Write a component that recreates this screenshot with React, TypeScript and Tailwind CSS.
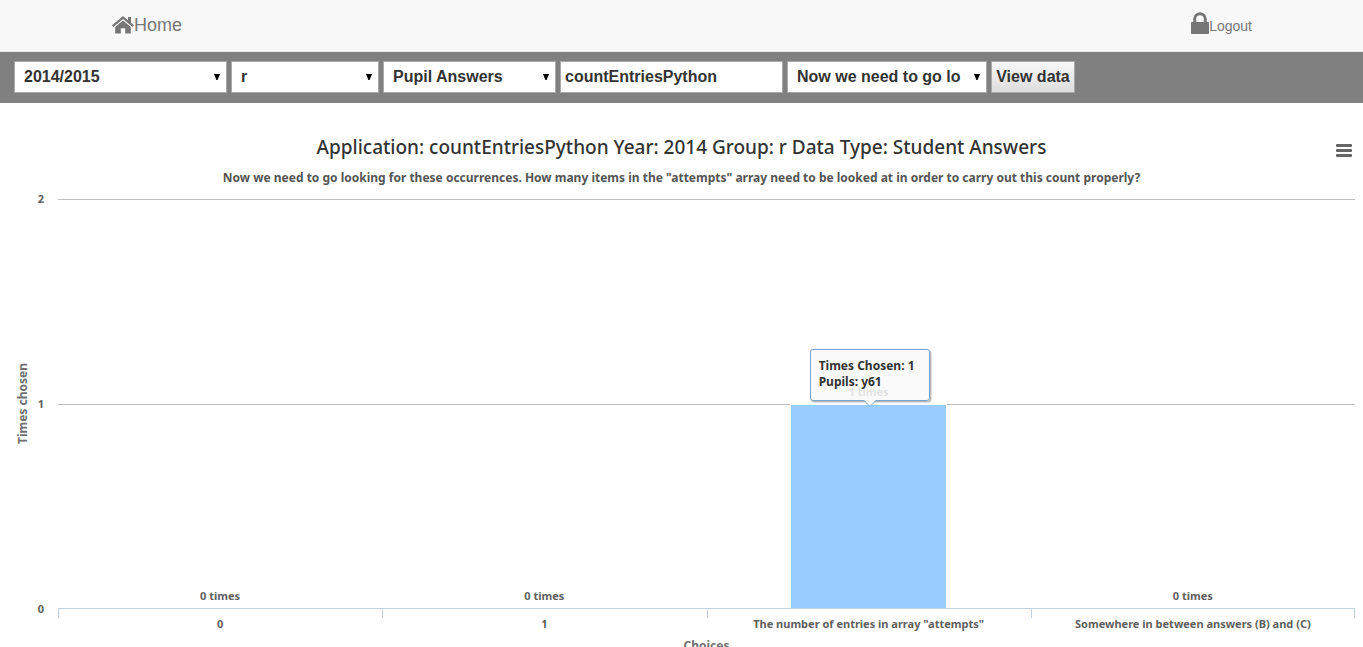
import React from "react";

type Category = { label: string; times: number };

const maxTimes = 2;

const categories: Category[] = [
  { label: "0", times: 0 },
  { label: "1", times: 0 },
  { label: 'The number of entries in array "attempts"', times: 1 },
  { label: "Somewhere in between answers (B) and (C)", times: 0 },
];

function HomeIcon() {
  return (
    <svg viewBox="0 0 22 18" className="h-[18px] w-[22px]" fill="currentColor" aria-hidden="true">
      <path d="M11 0 0 9.3l1.4 1.6L11 2.9l9.6 8 1.4-1.6-3-2.5V1h-3v3.2z" />
      <path d="M11 4.4 3.2 10.9V17.6h5.6v-5.4h4.4v5.4h5.6v-6.7z" />
    </svg>
  );
}

function LockIcon() {
  return (
    <svg viewBox="0 0 18 22" className="h-[22px] w-[18px]" fill="currentColor" aria-hidden="true">
      <path
        fillRule="evenodd"
        d="M2.2 10V7a6.8 6.8 0 0 1 13.6 0v3h1.2a1 1 0 0 1 1 1v10a1 1 0 0 1-1 1H1a1 1 0 0 1-1-1V11a1 1 0 0 1 1-1zM5.2 10h7.6V7a3.8 3.8 0 0 0-7.6 0z"
      />
    </svg>
  );
}

function Select({ label, value, width }: { label: string; value: string; width: string }) {
  return (
    <div className={`relative ${width}`}>
      <select
        aria-label={label}
        defaultValue={value}
        className="h-8 w-full appearance-none border border-[#a9a9a9] bg-white pr-6 pl-[9px] text-[#333]"
      >
        <option value={value}>{value}</option>
      </select>
      <svg
        viewBox="0 0 6 6"
        className="pointer-events-none absolute top-[13px] right-[7px] size-[6px] fill-black"
        aria-hidden="true"
      >
        <path d="M0 0h6L3.6 6H2.4z" />
      </svg>
    </div>
  );
}

function Tooltip() {
  return (
    <div className="absolute bottom-full left-1/2 z-10 mb-1 ml-px w-[120px] -translate-x-1/2">
      <div className="rounded-[3px] border border-[#7aa6d0] bg-[#f9f9f9]/85 px-2 pt-2 pb-[10px] text-xs leading-4 font-bold whitespace-nowrap text-[#333] shadow-[1px_1px_2px_rgba(0,0,0,0.4)]">
        <p>Times Chosen: 1</p>
        <p>Pupils: y61</p>
      </div>
      <svg
        viewBox="0 0 12 7"
        className="absolute top-full left-1/2 -mt-px h-[7px] w-3 -translate-x-1/2"
        aria-hidden="true"
      >
        <path d="M0 0h12L6 6z" fill="#f9f9f9" />
        <path d="M0 .5 6 6.5l6-6" fill="none" stroke="#7aa6d0" />
      </svg>
    </div>
  );
}

function Column({ times }: { times: number }) {
  return (
    <div className="flex flex-col items-center justify-end">
      <p className="mb-1 leading-4">{times} times</p>
      {times > 0 && (
        <div
          className="relative w-[48.5%] border border-b-0 border-white bg-[#99ccff]"
          style={{ height: `${(times / maxTimes) * 100}%` }}
        >
          <Tooltip />
        </div>
      )}
    </div>
  );
}

function Chart() {
  return (
    <section className="pt-8 font-['Noto_Sans','Open_Sans',sans-serif] text-[11px] font-bold text-[#606060]">
      <header className="relative text-center">
        <h1 className="text-[19px] leading-6 font-medium text-[#333]">
          Application: countEntriesPython Year: 2014 Group: r Data Type: Student Answers
        </h1>
        <p className="mt-[9px] text-xs leading-5 text-[#555]">
          Now we need to go looking for these occurrences. How many items in the "attempts" array need to be looked
          at in order to carry out this count properly?
        </p>
        <button type="button" aria-label="Chart menu" className="absolute top-[9px] right-[11px] text-[#666]">
          <svg viewBox="0 0 16 13" className="h-[13px] w-4" fill="currentColor" aria-hidden="true">
            <rect width="16" height="3" rx="1" />
            <rect y="5" width="16" height="3" rx="1" />
            <rect y="10" width="16" height="3" rx="1" />
          </svg>
        </button>
      </header>

      <div className="mt-[11px] grid grid-cols-[32px_26px_1fr] pr-2">
        <div className="flex items-center justify-center pl-[14px]">
          <p className="rotate-180 text-xs leading-4 whitespace-nowrap text-[#707070] [writing-mode:vertical-rl]">
            Times chosen
          </p>
        </div>
        <div className="-my-2 flex flex-col justify-between pr-[14px] text-right leading-4">
          <span>2</span>
          <span>1</span>
          <span>0</span>
        </div>
        <div className="grid h-[410px] border-b border-[#c0d0e0]">
          <div className="col-start-1 row-start-1 grid grid-rows-2">
            <div className="border-t border-[#c0c0c0]" />
            <div className="border-t border-[#c0c0c0]" />
          </div>
          <div className="col-start-1 row-start-1 grid grid-cols-4">
            {categories.map((c) => (
              <Column key={c.label} times={c.times} />
            ))}
          </div>
        </div>

        <div className="col-start-3 grid grid-cols-4 text-center leading-4">
          {categories.map((c) => (
            <div key={c.label} className="group">
              <div className="h-[9px] border-l border-[#c0d0e0] group-last:border-r" />
              <p className="-mt-0.5">{c.label}</p>
            </div>
          ))}
        </div>
        <p className="col-start-3 mt-[6px] text-center text-xs leading-4 text-[#707070]">Choices</p>
      </div>
    </section>
  );
}

export default function App() {
  return (
    <div className="h-screen overflow-hidden bg-white font-['Liberation_Sans',Arial,sans-serif]">
      <nav className="flex h-[52px] items-center justify-between border-b border-[#e7e7e7] bg-[#f8f8f8] pr-[111px] pb-0.5 pl-28 text-[#777]">
        <a href="#home" className="flex items-center text-lg leading-5">
          <HomeIcon />
          Home
        </a>
        <a href="#logout" className="flex items-end pb-1 text-sm leading-4">
          <LockIcon />
          Logout
        </a>
      </nav>

      <form
        className="flex gap-1 bg-[#808080] px-[14px] pt-[9px] pb-[10px] text-base font-bold text-[#333]"
        onSubmit={(e) => e.preventDefault()}
      >
        <Select label="Year" value="2014/2015" width="w-[213px]" />
        <Select label="Group" value="r" width="w-[148px]" />
        <Select label="Data type" value="Pupil Answers" width="w-[173px]" />
        <input
          aria-label="Application"
          defaultValue="countEntriesPython"
          className="h-8 w-[223px] border border-[#a9a9a9] bg-white px-1"
        />
        <Select label="Question" value="Now we need to go lo" width="w-[200px]" />
        <button
          type="submit"
          className="h-8 w-[84px] border border-[#a9a9a9] bg-linear-to-b from-[#f8f8f8] to-[#dddddd] whitespace-nowrap"
        >
          View data
        </button>
      </form>

      <Chart />
    </div>
  );
}
